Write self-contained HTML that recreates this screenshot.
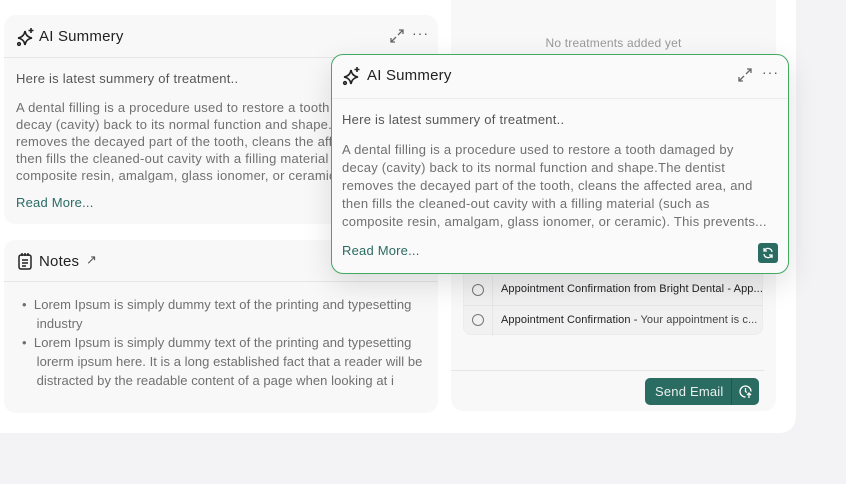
<!DOCTYPE html>
<html><head><meta charset="utf-8"><style>
*{margin:0;padding:0;box-sizing:border-box}
body{width:846px;height:484px;background:#f3f3f5;font-family:"Liberation Sans",sans-serif;position:relative;overflow:hidden;color:#666}
.abs{position:absolute}
.main{left:0;top:0;width:796px;height:433px;background:#fff;border-radius:0 0 16px 0}
.card{background:#f8f8f9;border-radius:12px}
.hdr{position:absolute;left:0;right:0;top:0;border-bottom:1px solid #e6e6e8}
.t{font-size:13px;color:#707070;line-height:17px;white-space:nowrap;letter-spacing:0.25px}
.title{font-size:15px;color:#222;letter-spacing:0.2px}
.rm{font-size:13px;color:#2a6b62;letter-spacing:0.2px}
</style></head><body>
<div class="abs main"></div>

<div class="abs card" style="left:4px;top:15px;width:434px;height:209px;overflow:hidden">
 <div class="hdr" style="height:43px"></div>
 <svg class="abs" style="left:12px;top:12px" width="20" height="20" viewBox="0 0 20 20" fill="none" stroke="#222" stroke-width="1.6"><path d="M9 4 Q10 10 16 11 Q10 12 9 18 Q8 12 2 11 Q8 10 9 4Z"/><path d="M15 1v5M12.5 3.5h5"/><circle cx="3" cy="17" r="1.3"/></svg>
 <div class="abs title" style="left:35px;top:13px">AI Summery</div>
 <svg class="abs" style="left:386px;top:14px" width="14" height="14" viewBox="0 0 14 14" fill="none" stroke="#666" stroke-width="1.3"><path d="M8 6l5-5M9 1h4v4M6 8l-5 5M1 9v4h4"/></svg>
 <div class="abs" style="left:408px;top:10px;font-size:14px;color:#555;letter-spacing:1px">···</div>
 <div class="abs t" style="left:12px;top:55px;color:#555">Here is latest summery of treatment..</div>
 <div class="abs t" style="left:12px;top:84px">A dental filling is a procedure used to restore a tooth damaged by<br>decay (cavity) back to its normal function and shape.The dentist<br>removes the decayed part of the tooth, cleans the affected area, and<br>then fills the cleaned-out cavity with a filling material (such as<br>composite resin, amalgam, glass ionomer, or ceramic). This prevents...</div>
 <div class="abs rm" style="left:12px;top:180px">Read More...</div>
</div>

<div class="abs card" style="left:4px;top:240px;width:434px;height:173px;overflow:hidden">
 <div class="hdr" style="height:42px"></div>
 <svg class="abs" style="left:13px;top:12px" width="16" height="18" viewBox="0 0 16 18" fill="none" stroke="#222" stroke-width="1.5"><rect x="2" y="3" width="12" height="14" rx="2"/><path d="M5 1v3M8 1v3M11 1v3M5 8h6M5 11h6M5 14h4"/></svg>
 <div class="abs title" style="left:35px;top:13px">Notes</div>
 <div class="abs" style="left:82px;top:12px;font-size:13px;color:#555">↗</div>
 <div class="abs t" style="left:18px;top:55px;line-height:19px;letter-spacing:0.05px">•&nbsp; Lorem Ipsum is simply dummy text of the printing and typesetting<br>&nbsp;&nbsp;&nbsp; industry<br>•&nbsp; Lorem Ipsum is simply dummy text of the printing and typesetting<br>&nbsp;&nbsp;&nbsp; lorerm ipsum here. It is a long established fact that a reader will be<br>&nbsp;&nbsp;&nbsp; distracted by the readable content of a page when looking at i</div>
</div>

<div class="abs card" style="left:451px;top:-12px;width:325px;height:423px">
 <div class="abs" style="left:0;right:0;top:48px;text-align:center;font-size:12px;color:#999;letter-spacing:0.2px">No treatments added yet</div>
 <div class="abs" style="left:12px;top:275px;width:300px;height:72px;background:#f1f1f2;border:1px solid #ececec;border-radius:8px"></div>
 <div class="abs" style="left:0;right:12px;top:382px;border-top:1px solid #e6e6e6"></div>
</div>
<div class="abs" style="left:472px;top:284px;width:12px;height:12px;border:1.3px solid #777;border-radius:50%"></div>
<div class="abs" style="left:472px;top:314px;width:12px;height:12px;border:1.3px solid #777;border-radius:50%"></div>
<div class="abs" style="left:492px;top:276px;height:60px;border-left:1px solid #e6e6e6"></div>
<div class="abs" style="left:463px;top:305px;width:300px;border-top:1px solid #e6e6e6"></div>
<div class="abs" style="left:501px;top:283px;font-size:11px;color:#222;white-space:nowrap;letter-spacing:0.1px">Appointment Confirmation from Bright Dental - App...</div>
<div class="abs" style="left:501px;top:314px;font-size:11px;color:#222;white-space:nowrap;letter-spacing:0.1px">Appointment Confirmation - <span style="color:#444">Your appointment is c...</span></div>
<div class="abs" style="left:645px;top:378px;width:114px;height:27px;background:#2a6b62;border-radius:5px">
 <div class="abs" style="left:10px;top:6px;font-size:13px;color:#e8f0ee;letter-spacing:0.2px">Send Email</div>
 <div class="abs" style="left:86px;top:0;height:27px;border-left:1px solid #1f564e"></div>
 <svg class="abs" style="left:93px;top:6px" width="15" height="15" viewBox="0 0 15 15" fill="none" stroke="#fff" stroke-width="1.3"><path d="M13 7.5A5.5 5.5 0 1 0 7.5 13"/><path d="M7.5 4v3.5l1.5 1M11 14V9M9 11l2-2 2 2"/></svg>
</div>

<div class="abs" style="left:331px;top:54px;width:458px;height:220px;background:#fafafa;border:1.5px solid #43a860;border-radius:12px;box-shadow:0 10px 30px rgba(0,0,0,0.12)">
 <div class="hdr" style="height:44px;border-color:#ececec"></div>
 <svg class="abs" style="left:10px;top:11px" width="20" height="20" viewBox="0 0 20 20" fill="none" stroke="#222" stroke-width="1.6"><path d="M9 4 Q10 10 16 11 Q10 12 9 18 Q8 12 2 11 Q8 10 9 4Z"/><path d="M15 1v5M12.5 3.5h5"/><circle cx="3" cy="17" r="1.3"/></svg>
 <div class="abs title" style="left:35px;top:12px">AI Summery</div>
 <svg class="abs" style="left:406px;top:13px" width="14" height="14" viewBox="0 0 14 14" fill="none" stroke="#666" stroke-width="1.3"><path d="M8 6l5-5M9 1h4v4M6 8l-5 5M1 9v4h4"/></svg>
 <div class="abs" style="left:430px;top:9px;font-size:14px;color:#555;letter-spacing:1px">···</div>
 <div class="abs t" style="left:10px;top:56px;color:#555">Here is latest summery of treatment..</div>
 <div class="abs t" style="left:10px;top:86px;line-height:18px">A dental filling is a procedure used to restore a tooth damaged by<br>decay (cavity) back to its normal function and shape.The dentist<br>removes the decayed part of the tooth, cleans the affected area, and<br>then fills the cleaned-out cavity with a filling material (such as<br>composite resin, amalgam, glass ionomer, or ceramic). This prevents...</div>
 <div class="abs rm" style="left:10px;top:188px">Read More...</div>
 <div class="abs" style="left:426px;top:188px;width:20px;height:20px;background:#2a6b62;border-radius:3px">
  <svg class="abs" style="left:4px;top:4px" width="12" height="12" viewBox="0 0 12 12" fill="none" stroke="#fff" stroke-width="1.3"><path d="M10 5A4 4 0 0 0 2.5 3.5M2 7a4 4 0 0 0 7.5 1.5M2 1v3h3M10 11V8H7"/></svg>
 </div>
</div>
</body></html>
